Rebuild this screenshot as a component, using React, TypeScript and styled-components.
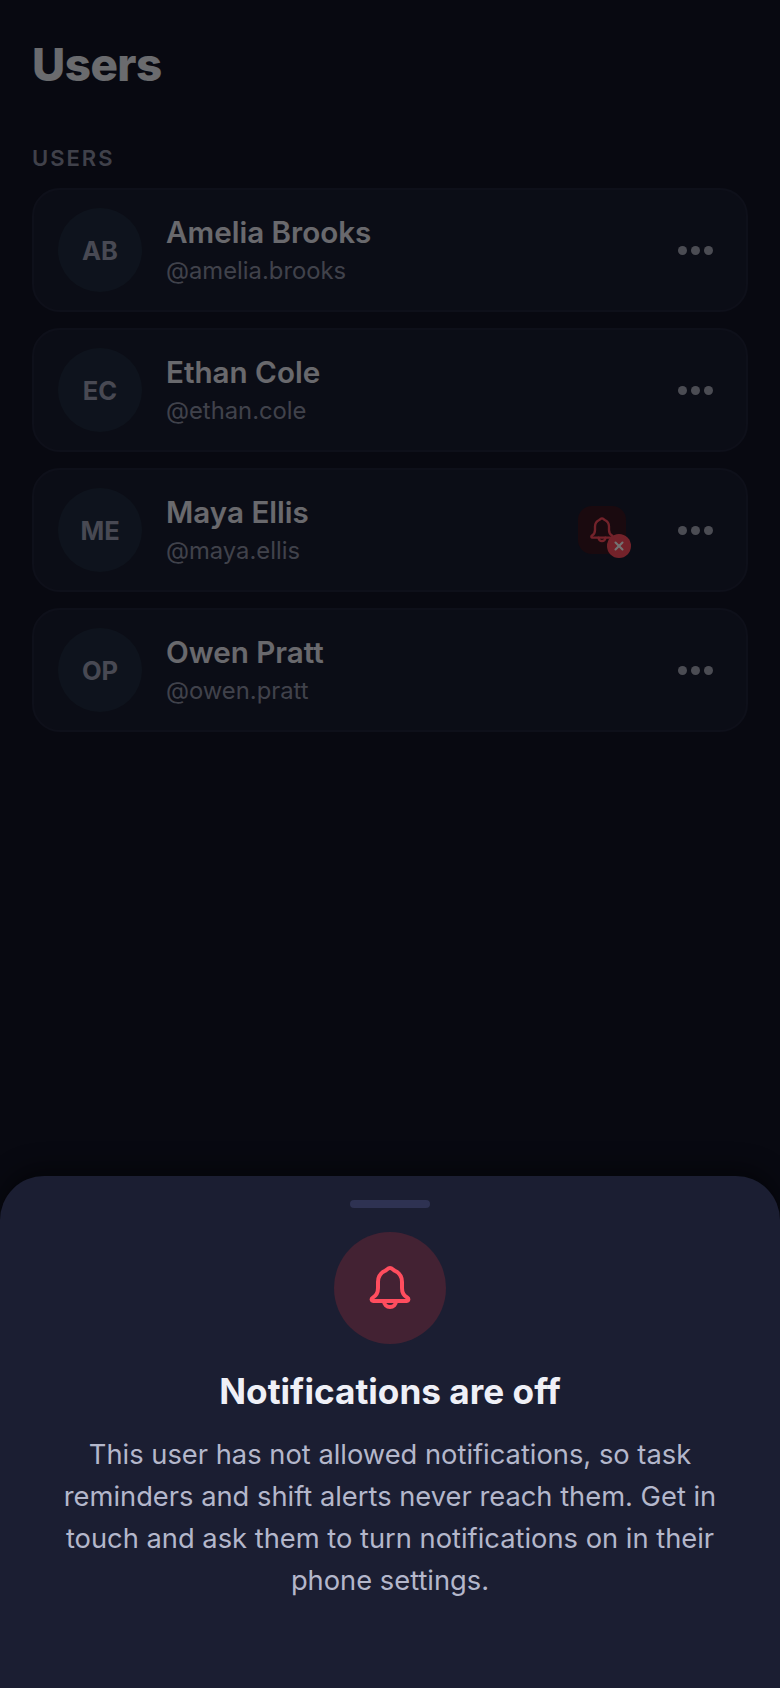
import React from 'react';
import styled, { createGlobalStyle } from 'styled-components';
import { X } from 'lucide-react';

const users = [
  { id: 'AB', name: 'Amelia Brooks', handle: '@amelia.brooks', muted: false },
  { id: 'EC', name: 'Ethan Cole', handle: '@ethan.cole', muted: false },
  { id: 'ME', name: 'Maya Ellis', handle: '@maya.ellis', muted: true },
  { id: 'OP', name: 'Owen Pratt', handle: '@owen.pratt', muted: false },
];

// Rounded bell with a closed clapper, lucide's one leaves the clapper open
const BellIcon: React.FC<{ size: number }> = ({ size }) => (
  <svg
    width={size}
    height={size}
    viewBox="0 0 24 24"
    fill="none"
    stroke="currentColor"
    strokeWidth={2}
    strokeLinecap="round"
    strokeLinejoin="round"
  >
    <path d="M12 2C13 2 13.6 2.9 14.4 3.4C16.6 4.4 18 6.4 18 9V12C18 14.5 19.2 16 20.6 16.8C21.6 17.4 21.2 18.5 20.2 18.5H3.8C2.8 18.5 2.4 17.4 3.4 16.8C4.8 16 6 14.5 6 12V9C6 6.4 7.4 4.4 9.6 3.4C10.4 2.9 11 2 12 2Z" />
    <path d="M9 18.5a3 3 0 0 0 6 0" />
  </svg>
);

const App: React.FC = () => {
  return (
    <Screen>
      <GlobalStyle />
      <Title>Users</Title>
      <SectionLabel>USERS</SectionLabel>
      <UserList>
        {users.map((user) => (
          <UserCard key={user.id}>
            <Avatar>{user.id}</Avatar>
            <UserInfo>
              <UserName>{user.name}</UserName>
              <UserHandle>{user.handle}</UserHandle>
            </UserInfo>
            {user.muted && (
              <MutedBadge>
                <BellIcon size={28} />
                <MutedMark>
                  <X size={14} strokeWidth={3.5} />
                </MutedMark>
              </MutedBadge>
            )}
            <MoreButton>
              <Dot />
              <Dot />
              <Dot />
            </MoreButton>
          </UserCard>
        ))}
      </UserList>

      <Backdrop />

      <Sheet>
        <Handle />
        <SheetIcon>
          <BellIcon size={48} />
        </SheetIcon>
        <SheetTitle>Notifications are off</SheetTitle>
        <SheetText>
          This user has not allowed notifications, so task reminders and shift alerts never reach
          them. Get in touch and ask them to turn notifications on in their phone settings.
        </SheetText>
      </Sheet>
    </Screen>
  );
};

const GlobalStyle = createGlobalStyle`
  html, body {
    margin: 0;
    padding: 0;
    background: #07080f;
  }

  body {
    font-family: Inter, "Liberation Sans", sans-serif;
  }
`;

const Screen = styled.div`
  position: relative;
  width: 780px;
  height: 1688px;
  box-sizing: border-box;
  padding: 36px 32px 0;
  overflow: hidden;
  background: #121526;
`;

const Title = styled.h1`
  margin: 0;
  font-size: 45.7px;
  line-height: 58px;
  font-weight: 800;
  letter-spacing: -0.5px;
  color: #eceef4;
`;

const SectionLabel = styled.div`
  margin-top: 50px;
  margin-bottom: 16px;
  font-size: 22px;
  line-height: 28px;
  font-weight: 600;
  letter-spacing: 2px;
  color: #8f91a5;
`;

const UserList = styled.div`
  display: flex;
  flex-direction: column;
  gap: 16px;
`;

const UserCard = styled.div`
  display: flex;
  align-items: center;
  height: 124px;
  box-sizing: border-box;
  padding: 0 33px 0 24px;
  border: 2px solid #20243a;
  border-radius: 28px;
  background: #1a1d31;
`;

const Avatar = styled.div`
  display: flex;
  align-items: center;
  justify-content: center;
  width: 84px;
  height: 84px;
  flex-shrink: 0;
  border-radius: 50%;
  background: #1f2c40;
  color: #a0a3b8;
  font-size: 25.5px;
  font-weight: 700;
`;

const UserInfo = styled.div`
  flex: 1;
  margin-left: 24px;
  display: flex;
  flex-direction: column;
  gap: 4px;
`;

const UserName = styled.div`
  font-size: 29.6px;
  line-height: 38px;
  font-weight: 600;
  color: #e8e9f2;
`;

const UserHandle = styled.div`
  font-size: 23.8px;
  line-height: 32px;
  color: #8f92a6;
`;

const MutedBadge = styled.div`
  position: relative;
  display: flex;
  align-items: center;
  justify-content: center;
  width: 48px;
  height: 48px;
  margin-right: 52px;
  border-radius: 14px;
  background: #3a1722;
  color: #ff4d5e;
`;

const MutedMark = styled.span`
  position: absolute;
  right: -5px;
  bottom: -4px;
  display: flex;
  align-items: center;
  justify-content: center;
  width: 24px;
  height: 24px;
  border-radius: 50%;
  background: #ff4d5e;
  color: #fff;
`;

const MoreButton = styled.div`
  display: flex;
  gap: 4px;
  padding-top: 1px;
`;

const Dot = styled.span`
  width: 9px;
  height: 9px;
  border-radius: 50%;
  background: #a6a8b8;
`;

const Backdrop = styled.div`
  position: absolute;
  inset: 0;
  background: rgba(0, 0, 0, 0.55);
`;

const Sheet = styled.div`
  position: absolute;
  left: 0;
  right: 0;
  bottom: 0;
  height: 512px;
  box-sizing: border-box;
  padding: 24px 48px 0;
  display: flex;
  flex-direction: column;
  align-items: center;
  border-radius: 44px 44px 0 0;
  background: #1b1e32;
  box-shadow: 0 -8px 24px rgba(0, 0, 0, 0.45);
`;

const Handle = styled.div`
  width: 80px;
  height: 8px;
  border-radius: 4px;
  background: #2e3252;
`;

const SheetIcon = styled.div`
  display: flex;
  align-items: center;
  justify-content: center;
  width: 112px;
  height: 112px;
  margin-top: 24px;
  border-radius: 50%;
  background: #432233;
  color: #ff4d5e;
`;

const SheetTitle = styled.h2`
  margin: 24px 0 0;
  font-size: 35.2px;
  line-height: 46px;
  font-weight: 700;
  color: #eff0f7;
`;

const SheetText = styled.p`
  margin: 20px 0 0;
  font-size: 27.3px;
  line-height: 42px;
  text-align: center;
  color: #b4b7cb;
`;

export default App;
